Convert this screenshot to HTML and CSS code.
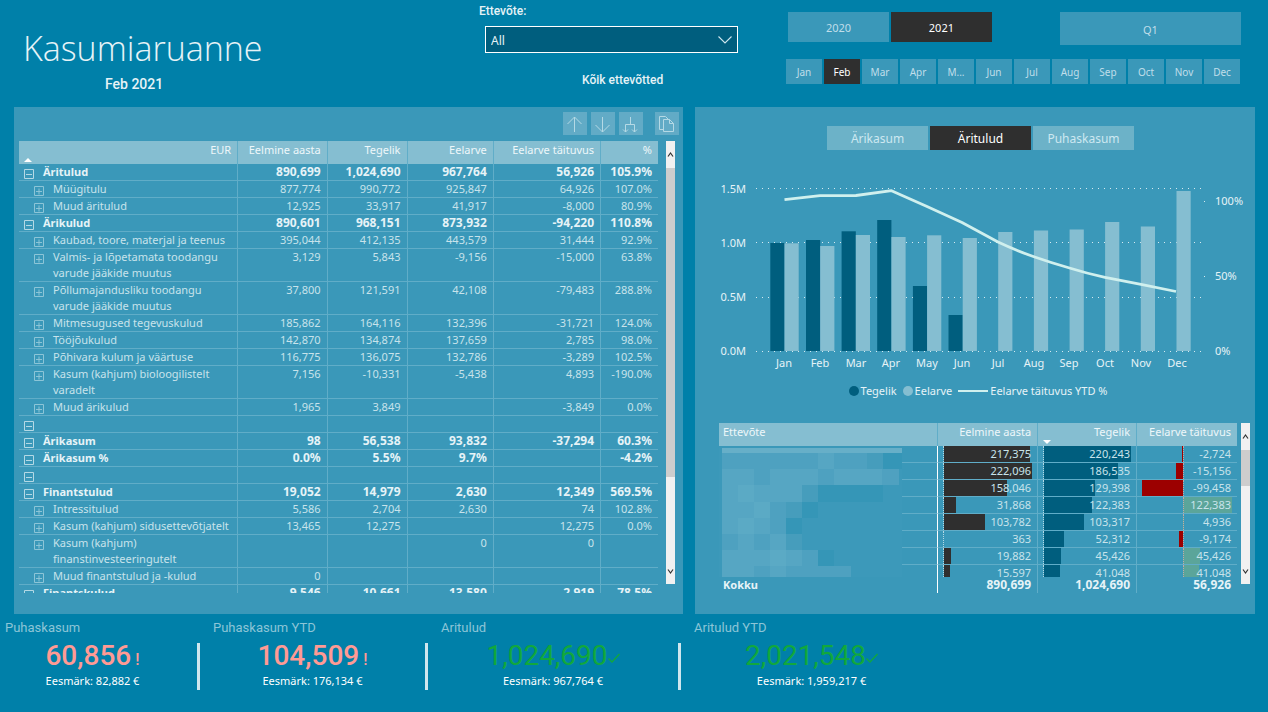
FILE: index.html
```html
<!DOCTYPE html>
<html lang="et">
<head>
<meta charset="utf-8">
<meta name="viewport" content="width=device-width, initial-scale=1">
<title>Kasumiaruanne</title>
<link rel="stylesheet" href="styles.css">
</head>
<body>
<svg class="defs" aria-hidden="true">
  <symbol id="minus" viewBox="0 0 10 10"><path d="M.5 .5h9v9h-9zM2 5.500h6" fill="none" stroke="currentColor"/></symbol>
  <symbol id="plus" viewBox="0 0 10 10"><path d="M.5 .5h9v9h-9zM2 5.500h6M5 2.500v6" fill="none" stroke="currentColor"/></symbol>
  <symbol id="check" viewBox="0 0 12 10"><path d="M.5 5.500L4 9L11.500 1" fill="none" stroke="currentColor" stroke-width="1.300"/></symbol>
  <symbol id="up" viewBox="0 0 9 27"><path d="M2 15.500L4.500 12L7 15.500" fill="none" stroke="#333" stroke-width="1.200"/></symbol>
  <symbol id="down" viewBox="0 0 9 27"><path d="M2 12.500L4.500 16L7 12.500" fill="none" stroke="#333" stroke-width="1.200"/></symbol>
</svg>

<header class="top">
  <div class="heading">
    <h1>Kasumiaruanne</h1>
    <p class="period">Feb 2021</p>
  </div>
  <div class="company">
    <label for="company">Ettevõte:</label>
    <div class="select-box">
      <select id="company"><option>All</option></select>
      <svg class="chevron" viewBox="0 0 14 8" aria-hidden="true"><path d="M.5 .5L7 7L13.500 .5" fill="none" stroke="#cfe6ee" stroke-width="1.100"/></svg>
    </div>
    <p class="company-note">Kõik ettevõtted</p>
  </div>
  <div class="slicers">
    <div class="periods">
      <div class="years">
        <button class="slicer">2020</button>
        <button class="slicer on">2021</button>
      </div>
      <button class="slicer quarter">Q1</button>
    </div>
    <div class="months">
      <button class="slicer">Jan</button><button class="slicer on">Feb</button><button class="slicer">Mar</button><button class="slicer">Apr</button><button class="slicer" aria-label="May">M...</button><button class="slicer">Jun</button><button class="slicer">Jul</button><button class="slicer">Aug</button><button class="slicer">Sep</button><button class="slicer">Oct</button><button class="slicer">Nov</button><button class="slicer">Dec</button>
    </div>
  </div>
</header>

<main class="panels">
  <section class="panel statement">
    <div class="tools">
      <button class="tool" aria-label="Drill up"><svg viewBox="0 0 24 23"><path d="M11.500 20V5M4.500 12L11.500 5L18.500 12"/></svg></button>
      <button class="tool" aria-label="Drill down"><svg viewBox="0 0 24 23"><path d="M11.500 5V20M4.500 13L11.500 20L18.500 13"/></svg></button>
      <button class="tool" aria-label="Expand all"><svg viewBox="0 0 24 23"><path d="M11.500 5V12.500M6.500 20V12.500H15.500V20M4 17.500L6.500 20L9 17.500M13 17.500L15.500 20L18 17.500"/></svg></button>
      <button class="tool copy" aria-label="Copy"><svg viewBox="0 0 24 23"><path d="M8 17.500H4.500V4.500H10.500L13 7M8.500 7.500H14.500L18.500 11.500V19.500H8.500ZM14.500 7.500V11.500H18.500"/></svg></button>
    </div>
    <div class="scroll-area">
      <div class="clip">
        <table class="grid">
          <colgroup><col class="c-name"><col class="c-prev"><col class="c-act"><col class="c-bud"><col class="c-diff"><col class="c-pct"></colgroup>
          <thead><tr><th scope="col">EUR<span class="sort-up"></span></th><th scope="col">Eelmine aasta</th><th scope="col">Tegelik</th><th scope="col">Eelarve</th><th scope="col">Eelarve täituvus</th><th scope="col">%</th></tr></thead>
          <tbody>
            <tr class="group"><th scope="row"><div class="node"><button aria-label="Collapse"><svg><use href="#minus"/></svg></button><span>Äritulud</span></div></th><td>890,699</td><td>1,024,690</td><td>967,764</td><td>56,926</td><td>105.9%</td></tr>
            <tr><th scope="row"><div class="node"><button aria-label="Expand"><svg><use href="#plus"/></svg></button><span>Müügitulu</span></div></th><td>877,774</td><td>990,772</td><td>925,847</td><td>64,926</td><td>107.0%</td></tr>
            <tr><th scope="row"><div class="node"><button aria-label="Expand"><svg><use href="#plus"/></svg></button><span>Muud äritulud</span></div></th><td>12,925</td><td>33,917</td><td>41,917</td><td>-8,000</td><td>80.9%</td></tr>
            <tr class="group"><th scope="row"><div class="node"><button aria-label="Collapse"><svg><use href="#minus"/></svg></button><span>Ärikulud</span></div></th><td>890,601</td><td>968,151</td><td>873,932</td><td>-94,220</td><td>110.8%</td></tr>
            <tr><th scope="row"><div class="node"><button aria-label="Expand"><svg><use href="#plus"/></svg></button><span>Kaubad, toore, materjal ja teenus</span></div></th><td>395,044</td><td>412,135</td><td>443,579</td><td>31,444</td><td>92.9%</td></tr>
            <tr><th scope="row"><div class="node"><button aria-label="Expand"><svg><use href="#plus"/></svg></button><span>Valmis- ja lõpetamata toodangu varude jääkide muutus</span></div></th><td>3,129</td><td>5,843</td><td>-9,156</td><td>-15,000</td><td>63.8%</td></tr>
            <tr><th scope="row"><div class="node"><button aria-label="Expand"><svg><use href="#plus"/></svg></button><span>Põllumajandusliku toodangu varude jääkide muutus</span></div></th><td>37,800</td><td>121,591</td><td>42,108</td><td>-79,483</td><td>288.8%</td></tr>
            <tr><th scope="row"><div class="node"><button aria-label="Expand"><svg><use href="#plus"/></svg></button><span>Mitmesugused tegevuskulud</span></div></th><td>185,862</td><td>164,116</td><td>132,396</td><td>-31,721</td><td>124.0%</td></tr>
            <tr><th scope="row"><div class="node"><button aria-label="Expand"><svg><use href="#plus"/></svg></button><span>Tööjõukulud</span></div></th><td>142,870</td><td>134,874</td><td>137,659</td><td>2,785</td><td>98.0%</td></tr>
            <tr><th scope="row"><div class="node"><button aria-label="Expand"><svg><use href="#plus"/></svg></button><span>Põhivara kulum ja väärtuse</span></div></th><td>116,775</td><td>136,075</td><td>132,786</td><td>-3,289</td><td>102.5%</td></tr>
            <tr><th scope="row"><div class="node"><button aria-label="Expand"><svg><use href="#plus"/></svg></button><span>Kasum (kahjum) bioloogilistelt varadelt</span></div></th><td>7,156</td><td>-10,331</td><td>-5,438</td><td>4,893</td><td>-190.0%</td></tr>
            <tr><th scope="row"><div class="node"><button aria-label="Expand"><svg><use href="#plus"/></svg></button><span>Muud ärikulud</span></div></th><td>1,965</td><td>3,849</td><td></td><td>-3,849</td><td>0.0%</td></tr>
            <tr class="group"><th scope="row"><div class="node"><button aria-label="Collapse"><svg><use href="#minus"/></svg></button></div></th><td></td><td></td><td></td><td></td><td></td></tr>
            <tr class="group"><th scope="row"><div class="node"><button aria-label="Collapse"><svg><use href="#minus"/></svg></button><span>Ärikasum</span></div></th><td>98</td><td>56,538</td><td>93,832</td><td>-37,294</td><td>60.3%</td></tr>
            <tr class="group"><th scope="row"><div class="node"><button aria-label="Collapse"><svg><use href="#minus"/></svg></button><span>Ärikasum %</span></div></th><td>0.0%</td><td>5.5%</td><td>9.7%</td><td></td><td>-4.2%</td></tr>
            <tr class="group"><th scope="row"><div class="node"><button aria-label="Collapse"><svg><use href="#minus"/></svg></button></div></th><td></td><td></td><td></td><td></td><td></td></tr>
            <tr class="group"><th scope="row"><div class="node"><button aria-label="Collapse"><svg><use href="#minus"/></svg></button><span>Finantstulud</span></div></th><td>19,052</td><td>14,979</td><td>2,630</td><td>12,349</td><td>569.5%</td></tr>
            <tr><th scope="row"><div class="node"><button aria-label="Expand"><svg><use href="#plus"/></svg></button><span>Intressitulud</span></div></th><td>5,586</td><td>2,704</td><td>2,630</td><td>74</td><td>102.8%</td></tr>
            <tr><th scope="row"><div class="node"><button aria-label="Expand"><svg><use href="#plus"/></svg></button><span>Kasum (kahjum) sidusettevõtjatelt</span></div></th><td>13,465</td><td>12,275</td><td></td><td>12,275</td><td>0.0%</td></tr>
            <tr><th scope="row"><div class="node"><button aria-label="Expand"><svg><use href="#plus"/></svg></button><span>Kasum (kahjum) finanstinvesteeringutelt</span></div></th><td></td><td></td><td>0</td><td>0</td><td></td></tr>
            <tr><th scope="row"><div class="node"><button aria-label="Expand"><svg><use href="#plus"/></svg></button><span>Muud finantstulud ja -kulud</span></div></th><td>0</td><td></td><td></td><td></td><td></td></tr>
            <tr class="group"><th scope="row"><div class="node"><button aria-label="Collapse"><svg><use href="#minus"/></svg></button><span>Finantskulud</span></div></th><td>9,546</td><td>10,661</td><td>13,580</td><td>2,919</td><td>78.5%</td></tr>
          </tbody>
        </table>
      </div>
      <div class="scrollbar"><svg><use href="#up"/></svg><i class="thumb thumb-long"></i><svg><use href="#down"/></svg></div>
    </div>
  </section>

  <section class="panel charts">
    <div class="tabs">
      <button class="slicer">Ärikasum</button><button class="slicer on">Äritulud</button><button class="slicer">Puhaskasum</button>
    </div>
    <svg class="chart" viewBox="695 180 560 194" role="img" aria-label="Tegelik, Eelarve ja Eelarve täituvus YTD %">
      <g class="dots"><path d="M756 188.500H1203M756 242.500H1203M756 297.500H1203M756 351.500H1206M1204 201.500h1M1204 276.500h1"/></g>
      <g fill="#005e7e">
        <rect x="770.300" y="243" width="14.200" height="108"/><rect x="806" y="240" width="14.200" height="111"/><rect x="841.600" y="231.300" width="14.200" height="119.700"/><rect x="877.200" y="220" width="14.200" height="131"/><rect x="912.900" y="286" width="14.200" height="65"/><rect x="948.500" y="315" width="14.200" height="36"/>
      </g>
      <g fill="#85bed1">
        <rect x="784.500" y="243.300" width="14.200" height="107.700"/><rect x="820.200" y="246" width="14.200" height="105"/><rect x="855.800" y="235" width="14.200" height="116"/><rect x="891.400" y="237" width="14.200" height="114"/><rect x="927.100" y="235.300" width="14.200" height="115.700"/><rect x="962.700" y="238" width="14.200" height="113"/><rect x="998.200" y="232" width="14.200" height="119"/><rect x="1033.900" y="230.500" width="14.200" height="120.500"/><rect x="1069.600" y="229.500" width="14.200" height="121.500"/><rect x="1105.100" y="222" width="14.200" height="129"/><rect x="1140.800" y="226.500" width="14.200" height="124.500"/><rect x="1176.500" y="191" width="14.200" height="160"/>
      </g>
      <path d="M784.500 199.700L820 195.700L856 195.500L891.500 190.700L927 206.500L962 222.500L998 242Q1016 250.500 1034 256.700Q1052 263 1069.500 268Q1087 273.500 1105 277.300L1141 284.300L1176 291.500" fill="none" stroke="#d0f0ee" stroke-width="2.800" stroke-linejoin="round"/>
      <g class="axis" text-anchor="end"><text x="746" y="193">1.5M</text><text x="746" y="247">1.0M</text><text x="746" y="301">0.5M</text><text x="746" y="355">0.0M</text></g>
      <g class="axis"><text x="1215" y="205">100%</text><text x="1215" y="280">50%</text><text x="1215" y="355">0%</text></g>
      <g class="axis" text-anchor="middle"><text x="784" y="367">Jan</text><text x="820" y="367">Feb</text><text x="856" y="367">Mar</text><text x="891" y="367">Apr</text><text x="927" y="367">May</text><text x="962" y="367">Jun</text><text x="998" y="367">Jul</text><text x="1034" y="367">Aug</text><text x="1069" y="367">Sep</text><text x="1105" y="367">Oct</text><text x="1141" y="367">Nov</text><text x="1177" y="367">Dec</text></g>
    </svg>
    <ul class="legend">
      <li><i class="dot dot-act"></i>Tegelik</li>
      <li><i class="dot dot-bud"></i>Eelarve</li>
      <li><i class="dash"></i>Eelarve täituvus YTD %</li>
    </ul>
    <div class="scroll-area companies">
      <div class="tables">
        <div class="clip clip-companies">
          <table class="grid by-company">
            <colgroup><col class="d-name"><col class="d-prev"><col class="d-act"><col class="d-diff"></colgroup>
            <thead><tr><th scope="col">Ettevõte</th><th scope="col">Eelmine aasta</th><th scope="col">Tegelik<span class="sort-down"></span></th><th scope="col">Eelarve täituvus</th></tr></thead>
            <tbody>
              <tr><td></td><td><span class="track"><i class="bar prev" style="width:98%"></i></span><b>217,375</b></td><td><span class="track"><i class="bar act" style="width:100%"></i></span><b>220,243</b></td><td><span class="track split"><i class="bar neg" style="width:1%"></i></span><b>-2,724</b></td></tr>
              <tr><td></td><td><span class="track"><i class="bar prev" style="width:100%"></i></span><b>222,096</b></td><td><span class="track"><i class="bar act" style="width:85%"></i></span><b>186,535</b></td><td><span class="track split"><i class="bar neg" style="width:7%"></i></span><b>-15,156</b></td></tr>
              <tr><td></td><td><span class="track"><i class="bar prev" style="width:71%"></i></span><b>158,046</b></td><td><span class="track"><i class="bar act" style="width:58%"></i></span><b>129,398</b></td><td><span class="track split"><i class="bar neg" style="width:45%"></i></span><b>-99,458</b></td></tr>
              <tr><td></td><td><span class="track"><i class="bar prev" style="width:13%"></i></span><b>31,868</b></td><td><span class="track"><i class="bar act" style="width:55%"></i></span><b>122,383</b></td><td><span class="track split"><i class="bar pos" style="width:55%"></i></span><b>122,383</b></td></tr>
              <tr><td></td><td><span class="track"><i class="bar prev" style="width:46%"></i></span><b>103,782</b></td><td><span class="track"><i class="bar act" style="width:46%"></i></span><b>103,317</b></td><td><span class="track split"><i class="bar pos" style="width:2%"></i></span><b>4,936</b></td></tr>
              <tr><td></td><td><span class="track"><i class="bar prev" style="width:0%"></i></span><b>363</b></td><td><span class="track"><i class="bar act" style="width:23%"></i></span><b>52,312</b></td><td><span class="track split"><i class="bar neg" style="width:4%"></i></span><b>-9,174</b></td></tr>
              <tr><td></td><td><span class="track"><i class="bar prev" style="width:8%"></i></span><b>19,882</b></td><td><span class="track"><i class="bar act" style="width:20%"></i></span><b>45,426</b></td><td><span class="track split"><i class="bar pos" style="width:20%"></i></span><b>45,426</b></td></tr>
              <tr><td></td><td><span class="track"><i class="bar prev" style="width:7%"></i></span><b>15,597</b></td><td><span class="track"><i class="bar act" style="width:18%"></i></span><b>41,048</b></td><td><span class="track split"><i class="bar pos" style="width:18%"></i></span><b>41,048</b></td></tr>
            </tbody>
          </table>
          <svg class="mosaic" viewBox="0 0 183 129" aria-hidden="true">
            <rect width="183" height="129" fill="#3c99ba"/>
            <path fill="#67afc8" d="M3 0h180v5H3z"/>
            <path fill="#4ea1c0" d="M3 5h145v16H3zM3 21h160v16H3zM3 37h80v17H3zM3 54h64v16H3zM3 70h64v16H3zM3 86h64v16H3zM3 102h97v16H3zM3 118h129v11H3z"/>
            <path fill="#56a6c3" d="M3 21h32v16H3zM51 21h48v16H51zM115 21h48v16h-48zM99 5h16v16h-16zM3 37h80v17H3zM3 54h48v16H3zM3 70h48v16H3zM19 86h16v16H19zM51 86h16v16H51zM3 102h80v16H3zM3 118h32v11H3zM51 118h16v11H51z"/>
            <path fill="#5baac5" d="M19 37h16v17H19zM35 54h16v16H35zM19 70h16v16H19zM51 102h16v16H51z"/>
            <path fill="#469dbc" d="M148 5h16v16h-16zM83 37h16v17H83zM67 54h16v16H67zM67 86h16v16H67z"/>
            <path fill="#4fa1c0" d="M163 21h17v16h-17z"/>
            <path fill="#3596b7" d="M164 5h19v16h-19zM99 37h65v17H99zM83 54h16v16H83zM67 70h16v16H67zM99 102h16v16H99z"/>
          </svg>
        </div>
        <table class="grid by-company totals">
          <colgroup><col class="d-name"><col class="d-prev"><col class="d-act"><col class="d-diff"></colgroup>
          <tbody><tr class="group"><th scope="row">Kokku</th><td>890,699</td><td>1,024,690</td><td>56,926</td></tr></tbody>
        </table>
      </div>
      <div class="scrollbar"><svg><use href="#up"/></svg><i class="thumb thumb-short"></i><svg><use href="#down"/></svg></div>
    </div>
  </section>
</main>

<footer class="kpis">
  <article class="kpi"><h2>Puhaskasum</h2><div class="kpi-body"><p class="value bad">60,856<span class="mark">!</span></p><p class="goal">Eesmärk: 82,882 €</p></div></article>
  <article class="kpi"><h2>Puhaskasum YTD</h2><div class="kpi-body"><p class="value bad">104,509<span class="mark">!</span></p><p class="goal">Eesmärk: 176,134 €</p></div></article>
  <article class="kpi"><h2>Aritulud</h2><div class="kpi-body"><p class="value good">1,024,690<svg class="tick"><use href="#check"/></svg></p><p class="goal">Eesmärk: 967,764 €</p></div></article>
  <article class="kpi"><h2>Aritulud YTD</h2><div class="kpi-body"><p class="value good">2,021,548<svg class="tick"><use href="#check"/></svg></p><p class="goal">Eesmärk: 1,959,217 €</p></div></article>
</footer>
</body>
</html>
```

FILE: styles.css
```css
* { box-sizing: border-box; }

body {
  margin: 0;
  min-height: 100vh;
  background: #0080a9;
  color: #e6f3f7;
  font: 11px/16px "Noto Sans", "Open Sans", sans-serif;
}

h1, h2, p, ul { margin: 0; padding: 0; }
button { font: inherit; color: inherit; border: 0; padding: 0; background: none; }
.defs { display: none; }

/* Header */
.top {
  display: grid;
  grid-template-columns: 456fr 307fr 455fr;
  height: 107px;
  padding: 0 27px 0 23px;
}
.heading { padding-top: 24px; }
.heading h1 { font: 300 34px/48px "Open Sans", "Noto Sans", sans-serif; color: #e6f3f7; }
.period { padding: 4px 0 0 82px; font: 500 14px/16px Roboto, sans-serif; }
.company { padding: 3px 48px 0 0; }
.company label { display: block; font: 500 12px/16px Roboto, sans-serif; }
.select-box { position: relative; margin: 7px 0 0 6px; }
.select-box select {
  display: block;
  width: 100%;
  height: 27px;
  padding: 3px 5px 0;
  border: 1px solid #fff;
  border-radius: 0;
  appearance: none;
  background: #005e7e;
  color: #e6f3f7;
  font: 12px/20px "Noto Sans", sans-serif;
}
.chevron { position: absolute; right: 6px; top: 10px; width: 14px; height: 8px; }
.company-note { padding: 19px 0 0 103px; font: 500 12px/16px Roboto, sans-serif; }

/* Slicers */
.slicer { background: #3a98b9; color: #c0deea; text-align: center; }
.slicer.on { background: #2f2f2f; color: #fff; }
.slicers { padding-top: 12px; }
.periods { display: flex; justify-content: space-between; align-items: flex-start; height: 47px; padding-left: 2px; }
.years { display: grid; grid-template-columns: 1fr 1fr; gap: 2px; width: 45%; }
.years .slicer { height: 30px; padding-top: 1px; }
.quarter { width: 40%; height: 33px; padding-top: 2px; }
.months { display: grid; grid-template-columns: repeat(12, 1fr); gap: 2px; padding-right: 1px; }
.months .slicer { height: 25px; padding-top: 1px; font-size: 10px; }

/* Panels */
.panels {
  display: grid;
  grid-template-columns: 669fr 560fr;
  gap: 12px;
  padding: 0 13px 0 14px;
}
.panel { background: #3a98b9; min-width: 0; }
.statement { padding: 5px 8px 21px 5px; }
.tools { display: flex; justify-content: flex-end; gap: 4px; height: 29px; margin-right: -4px; }
.tool { width: 24px; height: 23px; background: #62abc6; }
.tool.copy { margin-left: 8px; }
.tool svg { display: block; width: 24px; height: 23px; fill: none; stroke: #b4d9e5; }

.scroll-area { display: flex; gap: 8px; align-items: flex-start; }
.clip { flex: 1; min-width: 0; height: 452px; overflow: hidden; }
.scrollbar { display: flex; flex-direction: column; width: 9px; height: 443px; background: #f1f1f1; }
.scrollbar svg { display: block; width: 9px; height: 27px; }
.scrollbar svg:last-child { margin-top: auto; }
.thumb { background: #cdcdcd; }
.thumb-long { height: 309px; }
.thumb-short { height: 36px; }

/* Data tables */
.grid { width: 100%; table-layout: fixed; border-collapse: separate; border-spacing: 0; }
.grid th, .grid td {
  height: 17px;
  padding: 0 6px 0 0;
  border-right: 1px solid #60adc8;
  border-bottom: 1px solid #60adc8;
  color: #c8e3eb;
  font-weight: 400;
  text-align: right;
  vertical-align: top;
}
.grid tr > :last-child { border-right: 0; }
.grid thead th { position: relative; height: 23px; padding-top: 1px; background: #85bed1; border-bottom: 0; color: #eef7fa; }
.grid tbody th { text-align: left; padding: 0; }
.grid .group th, .grid .group td { color: #e6f3f7; font-size: 12px; font-weight: 700; }
.grid .group th { font-size: 11px; }
.c-name { width: 34.3%; } .c-prev { width: 14%; } .c-act { width: 12.5%; }
.c-bud { width: 13.5%; } .c-diff { width: 16.8%; } .c-pct { width: 8.9%; }
.node { display: flex; align-items: flex-start; gap: 9px; padding-left: 15px; min-height: 16px; }
.group .node { padding-left: 5px; }
.node button { flex: none; height: 10px; margin-top: 5px; color: #8cc5d7; }
.group .node button { color: #b4d9e5; }
.node svg { display: block; width: 10px; height: 10px; }
.sort-up, .sort-down { position: absolute; left: 5px; bottom: 2px; border: 4px solid transparent; }
.sort-up { border-top: 0; border-bottom-color: #fff; }
.sort-down { border-bottom: 0; border-top-color: #fff; }

/* Chart */
.charts { padding: 19px 5px 21px 0; }
.tabs { display: grid; grid-template-columns: repeat(3, 1fr); gap: 2px; width: 307px; margin-left: 132px; }
.tabs .slicer { height: 24px; font-size: 12px; padding-top: 1px; }
.tabs .slicer:not(.on) { background: #6cb2c8; color: #cde8f1; }
.chart { display: block; width: calc(100% + 5px); margin-top: 30px; }
.dots { fill: none; stroke: #d5eaf1; stroke-dasharray: 1 5; }
.axis { fill: #e6f3f7; font-size: 11px; }
.legend { display: flex; justify-content: center; gap: 6px; padding: 9px 0 0 11px; list-style: none; }
.legend li { display: flex; align-items: center; gap: 2px; }
.dot { width: 10px; height: 10px; border-radius: 50%; }
.dot-act { background: #005e7e; }
.dot-bud { background: #85bed1; }
.dash { width: 30px; height: 2px; background: #d0f0ee; }

/* Company table */
.companies { gap: 4px; padding: 24px 0 0 24px; }
.companies .scrollbar { height: 161px; }
.tables { flex: 1; min-width: 0; }
.clip-companies { position: relative; height: 154px; }
.by-company thead th:first-child { text-align: left; padding-left: 4px; }
.by-company tbody tr > :first-child { border-right-color: #fff; }
.by-company td { position: relative; }
.by-company td b { position: relative; font-weight: 400; }
.totals th, .totals td { border-bottom: 0; height: 16px; }
.totals tbody th { padding-left: 4px; }
.d-name { width: 42.3%; } .d-prev { width: 19.3%; } .d-act { width: 19.1%; } .d-diff { width: 19.3%; }
.track { position: absolute; inset: 0 5px 0 5px; border-left: 1px dotted #b4d9e5; }
.track.split { border-left: 0; }
.track.split::after { content: ""; position: absolute; left: 45%; top: 0; bottom: 0; border-left: 1px dotted #c0a8a8; }
.bar { position: absolute; top: 0; bottom: 0; left: 0; }
.prev { background: #2f2f2f; }
.act { background: #005e7e; }
.neg { background: #9c0000; left: auto; right: 55%; }
.pos { background: #5ba59a; left: 45%; }
.mosaic { position: absolute; left: 0; top: 25px; width: 183px; height: 129px; }

/* KPI cards */
.kpis { display: grid; grid-template-columns: 200fr 228fr 253fr 261fr 326fr; }
.kpi h2 { height: 29px; padding: 6px 0 0 13px; color: #8cc5d7; font: 400 13px/16px Roboto, sans-serif; }
.kpi:first-child h2 { padding-left: 5px; }
.kpi-body { height: 47px; border-right: 3px solid #cfe6ee; text-align: center; }
.kpi:first-child .kpi-body { padding-right: 12px; }
.kpi:last-child .kpi-body { border-right: 0; }
.value { display: flex; justify-content: center; align-items: baseline; height: 26px; font: 400 28px/26px Roboto, sans-serif; }
.bad { color: #ff9a94; font-weight: 500; }
.good { color: #12a83c; }
.mark { padding-left: 4px; font-size: 16px; }
.tick { width: 12px; height: 10px; align-self: center; margin-top: 4px; }
.goal { padding-top: 4px; color: #fff; }
```
